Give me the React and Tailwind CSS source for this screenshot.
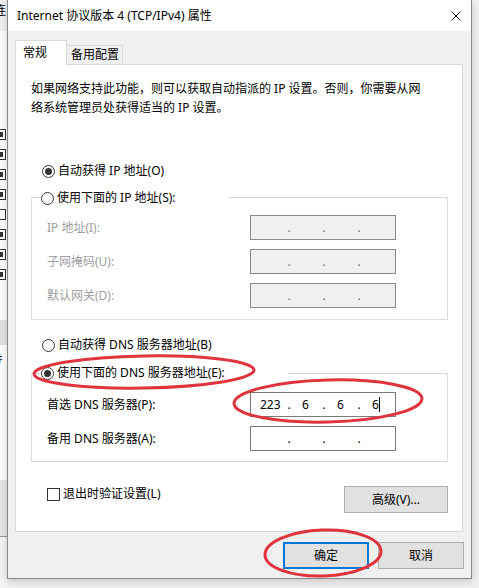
import React from 'react';

const Radio = ({ checked }) => (
    <span className="w-[13px] h-[13px] rounded-full border border-[#333333] bg-white flex items-center justify-center shrink-0">
        {checked && <span className="w-[7px] h-[7px] rounded-full bg-[#333333]" />}
    </span>
);

// IP address control: four number fields split by dots
const IpField = ({ parts = ['', '', '', ''], disabled, caret }) => (
    <div
        className={`w-[146px] h-[25px] border flex items-center pl-[9px] text-[12px] leading-none ${disabled
            ? 'bg-[#f0f0f0] border-[#8a8a8a] text-[#6d6d6d]'
            : 'bg-white border-[#7a7a7a] text-black'
            }`}
    >
        <span className="w-[26px]">{parts[0]}</span>
        <span className="w-[6px] text-center">.</span>
        <span className="ml-[10px] w-[19px]">{parts[1]}</span>
        <span className="w-[6px] text-center">.</span>
        <span className="ml-[10px] w-[19px]">{parts[2]}</span>
        <span className="w-[6px] text-center">.</span>
        <span className="ml-[10px] flex items-center">
            {parts[3]}
            {caret && <span className="w-px h-[15px] bg-black" />}
        </span>
    </div>
);

const FieldRow = ({ label, disabled, children, first }) => (
    <div className={`flex items-center ${first ? 'mt-[7px]' : 'mt-[9px]'}`}>
        <span className={`pl-[15px] w-[218px] ${disabled ? 'text-[#a0a0a0]' : 'text-black'}`}>{label}</span>
        {children}
    </div>
);

const Button = ({ children, primary, className = '' }) => (
    <div
        className={`h-[27px] flex items-center justify-center bg-[#e1e1e1] ${primary ? 'border-2 border-[#0078d7]' : 'border border-[#adadad]'
            } ${className}`}
    >
        {children}
    </div>
);

const BackWindow = () => (
    <div className="absolute left-0 top-0 w-[7px] h-[588px] flex flex-col overflow-hidden">
        <div className="h-[31px] bg-[#f0f0f0] text-[12px] pt-[2px] -ml-[6px] text-black">连</div>
        <div className="h-[289px] bg-white flex flex-col pt-[98px] gap-[9px]">
            {[1, 1, 1, 1, 0, 1, 1, 1].map((on, i) => (
                <div key={i} className="-ml-[5px] w-[11px] h-[11px] border border-[#333333] bg-white flex items-center justify-center">
                    {on === 1 && <span className="w-[5px] h-[5px] bg-[#333333]" />}
                </div>
            ))}
        </div>
        <div className="h-[25px] bg-[#e3e3e3]" />
        <div className="h-[135px] bg-white text-[12px] pt-[6px] -ml-[4px]">扌</div>
        <div className="h-[57px] bg-[#e6e6e6] border-b border-[#9a9a9a]" />
        <div className="flex-1 bg-[#f3f3f3]" />
    </div>
);

const Annotations = () => (
    <svg className="absolute left-0 top-0 pointer-events-none" width="479" height="588" viewBox="0 0 479 588">
        <g fill="none" stroke="#e0343d" strokeWidth="3">
            <ellipse cx="144" cy="372" rx="110" ry="16" transform="rotate(-1 144 372)" />
            <ellipse cx="328" cy="401" rx="94" ry="21" transform="rotate(-1.5 328 401)" />
            <ellipse cx="323" cy="553" rx="58" ry="23" transform="rotate(-2 323 553)" />
        </g>
    </svg>
);

export default function App() {
    return (
        <div className="relative w-[479px] h-[588px] overflow-hidden bg-[#f0f0f0] font-['Noto_Sans','Noto_Sans_CJK_SC',sans-serif] text-[12px] text-black">
            <BackWindow />

            {/* Dialog */}
            <div className="absolute left-[7px] top-0 w-[465px] h-[579px] border border-t-0 border-[#888888] bg-[#f0f0f0] flex flex-col shadow-[0_2px_8px_rgba(0,0,0,0.18)]">
                {/* Title bar */}
                <div className="h-[31px] bg-white flex items-center justify-between pl-[9px] pr-[10px] shrink-0">
                    <span className="text-[12px] leading-none">Internet 协议版本 4 (TCP/IPv4) 属性</span>
                    <svg width="10" height="10" viewBox="0 0 10 10">
                        <path d="M0.5 0.5 L9.5 9.5 M9.5 0.5 L0.5 9.5" stroke="#111111" strokeWidth="1" />
                    </svg>
                </div>

                {/* Tabs */}
                <div className="flex items-end pl-[7px] pt-[9px]">
                    <div className="relative z-10 -mb-px w-[52px] h-[25px] bg-white border border-b-0 border-[#d9d9d9] flex items-center pl-[7px]">
                        常规
                    </div>
                    <div className="w-[56px] h-[19px] border border-l-0 border-b-0 border-[#d9d9d9] flex items-center pl-[4px] pb-px">
                        备用配置
                    </div>
                </div>

                {/* Panel */}
                <div className="ml-[7px] w-[448px] h-[468px] bg-white border border-[#d9d9d9] flex flex-col">
                    <p className="mt-[14px] pl-[15px] leading-[19px] whitespace-nowrap">
                        如果网络支持此功能，则可以获取自动指派的 IP 设置。否则，你需要从网
                        <br />
                        络系统管理员处获得适当的 IP 设置。
                    </p>

                    <div className="mt-[44px] ml-[26px] h-[20px] flex items-center gap-[3px]">
                        <Radio checked />
                        <span>自动获得 IP 地址(O)</span>
                    </div>

                    <div className="mt-[16px] ml-[15px] w-[417px] border border-[#dcdcdc] pb-[11px]">
                        <div className="-mt-[10px] ml-[9px] w-[187px] h-[20px] bg-white flex items-center gap-[3px]">
                            <Radio />
                            <span>使用下面的 IP 地址(S):</span>
                        </div>
                        <FieldRow label="IP 地址(I):" disabled first>
                            <IpField disabled />
                        </FieldRow>
                        <FieldRow label="子网掩码(U):" disabled>
                            <IpField disabled />
                        </FieldRow>
                        <FieldRow label="默认网关(D):" disabled>
                            <IpField disabled />
                        </FieldRow>
                    </div>

                    <div className="mt-[15px] ml-[26px] h-[20px] flex items-center gap-[3px]">
                        <Radio />
                        <span>自动获得 DNS 服务器地址(B)</span>
                    </div>

                    <div className="mt-[18px] ml-[15px] w-[417px] border border-[#dcdcdc] pb-[10px]">
                        <div className="-mt-[11px] ml-[9px] w-[247px] h-[20px] bg-white flex items-center gap-[3px]">
                            <Radio checked />
                            <span>使用下面的 DNS 服务器地址(E):</span>
                        </div>
                        <div className="mt-[9px] flex items-center">
                            <span className="pl-[15px] w-[218px]">首选 DNS 服务器(P):</span>
                            <IpField parts={['223', '6', '6', '6']} caret />
                        </div>
                        <div className="mt-[9px] flex items-center">
                            <span className="pl-[15px] w-[218px]">备用 DNS 服务器(A):</span>
                            <IpField />
                        </div>
                    </div>

                    <div className="mt-[22px] pl-[31px] pr-[14px] flex items-start justify-between">
                        <div className="h-[20px] flex items-center gap-[3px]">
                            <span className="w-[13px] h-[13px] border border-[#333333] bg-white" />
                            <span>退出时验证设置(L)</span>
                        </div>
                        <Button className="mt-[2px] w-[104px]">高级(V)...</Button>
                    </div>
                </div>

                {/* Footer buttons */}
                <div className="mt-[10px] pr-[7px] flex justify-end gap-[9px]">
                    <Button primary className="w-[86px]">确定</Button>
                    <Button className="w-[86px]">取消</Button>
                </div>
            </div>

            <Annotations />
        </div>
    );
}
